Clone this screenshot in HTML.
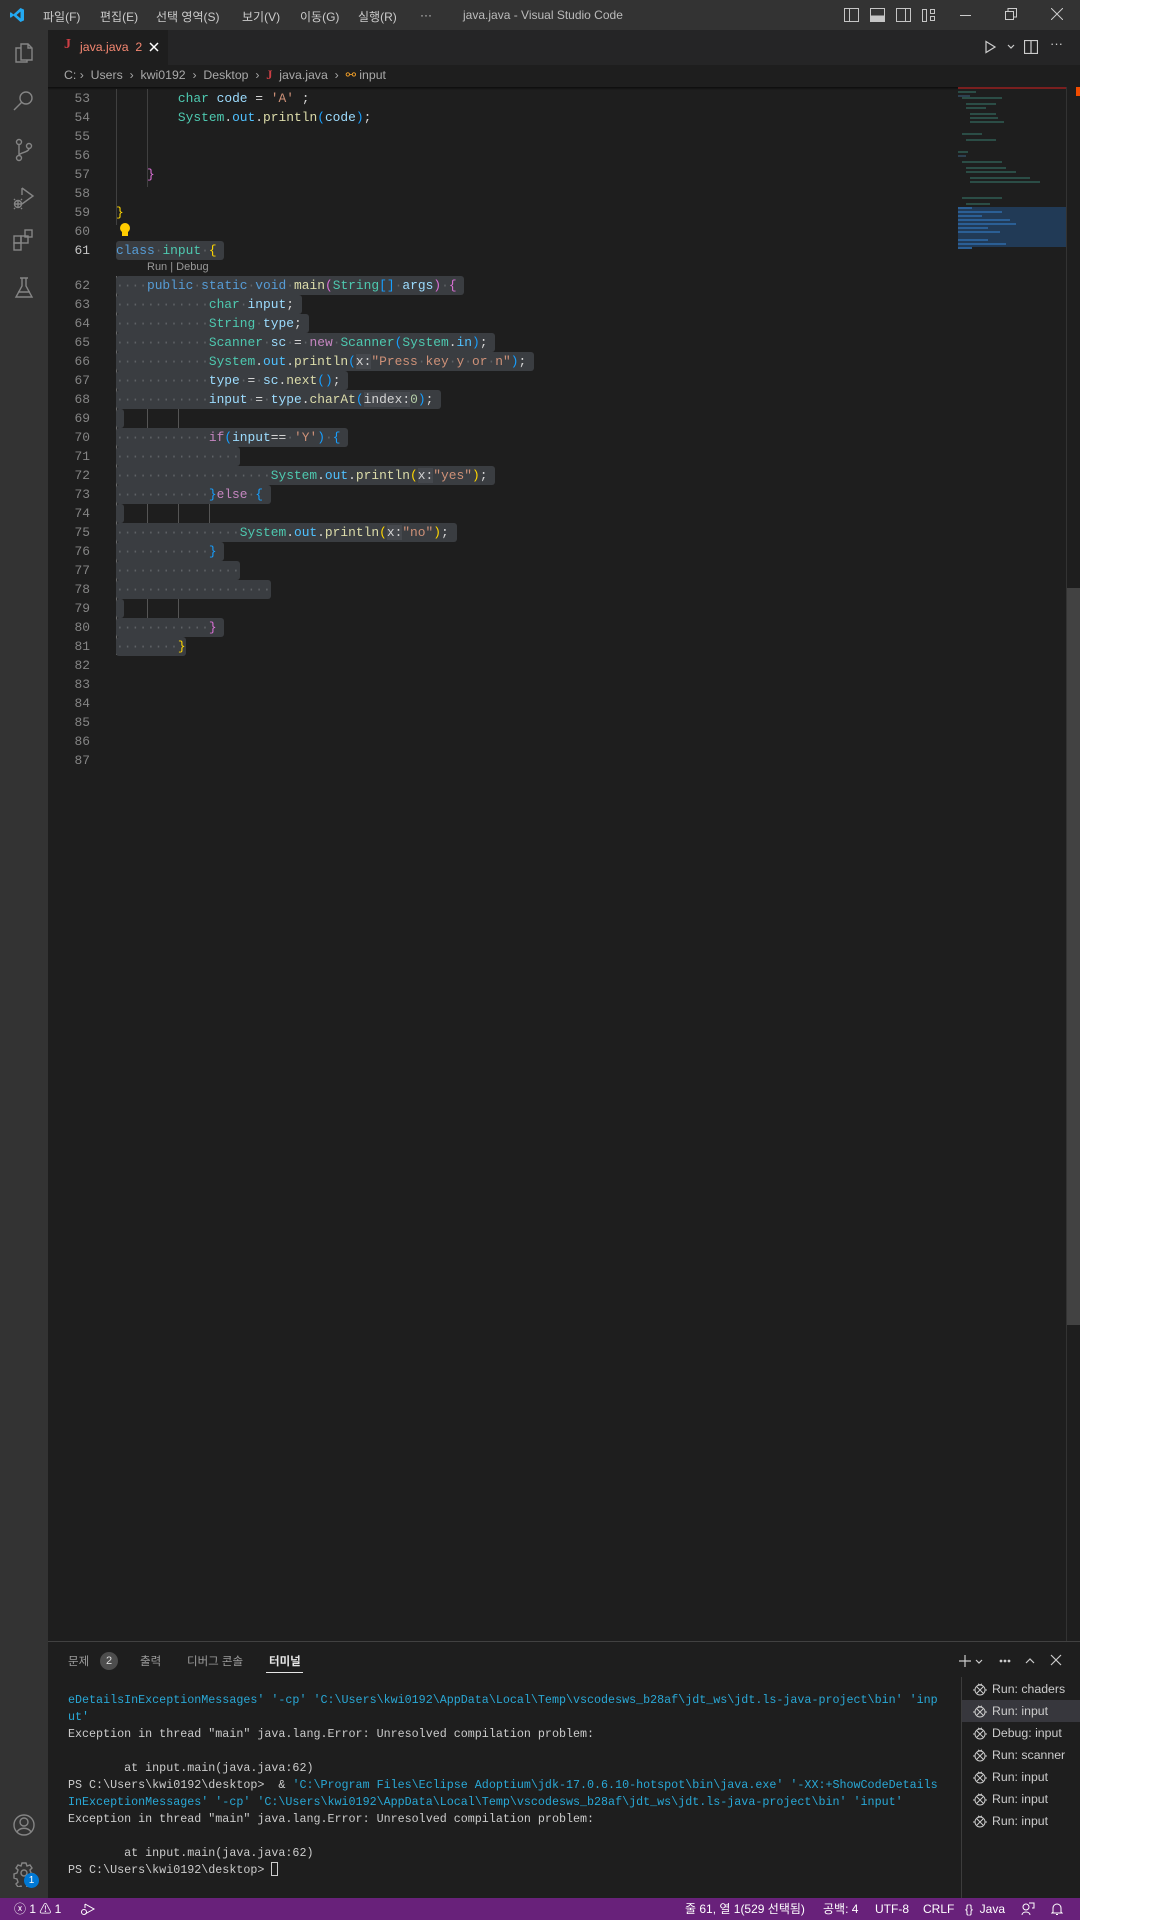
<!DOCTYPE html>
<html><head><meta charset="utf-8">
<style>
*{margin:0;padding:0;box-sizing:border-box}
body{width:1152px;height:1920px;background:#fff;position:relative;overflow:hidden;font-family:"Liberation Sans","Noto Sans CJK KR",sans-serif}
.a{position:absolute}
#win{position:absolute;left:0;top:0;width:1080px;height:1920px;background:#1e1e1e;overflow:hidden}
.mono{font-family:"Liberation Mono","DejaVu Sans Mono",monospace}
.ln{position:absolute;left:48px;width:42px;text-align:right;color:#858585;font-size:12.9px;line-height:19px;height:19px}
.cl{position:absolute;left:116px;font-size:12.9px;line-height:19px;height:19px;white-space:pre;color:#d4d4d4}
.s{display:inline-block;height:19px;background:#3a3d41;border-radius:3px;vertical-align:top}
.d{color:#5f6266}
.k{color:#569cd6}.t{color:#4ec9b0}.v{color:#9cdcfe}.f{color:#dcdcaa}.p{color:#c586c0}.st{color:#ce9178}.c{color:#4fc1ff}.n{color:#b5cea8}
.y{color:#ffd700}.m{color:#da70d6}.b{color:#179fff}
.h{color:#d4d4d4;background:#45484d}
.g{position:absolute;width:1px;background:#404040}
.menu{position:absolute;top:8px;font-size:12px;color:#cccccc}
.tl{position:absolute;left:68px;font-size:11.7px;line-height:17px;white-space:pre;color:#cccccc}
.cy{color:#29a8d6}
.ti{position:absolute;left:962px;width:118px;height:22px;font-size:12.3px;color:#cccccc;line-height:22px;padding-left:30px}
.ti svg{position:absolute;left:10px;top:3px}
.sb{position:absolute;top:1898px;font-size:12px;color:#fff;line-height:22px}
</style></head><body>
<div id="win">
<div class="a" style="left:0;top:0;width:1080px;height:30px;background:#333333"></div>
<svg class="a" style="left:9px;top:7px" width="16" height="16" viewBox="0 0 16 16"><path d="M11.5 1 L15 2.6 V13.4 L11.5 15 L4.5 8.6 L1.8 10.7 L1 10.2 V5.8 L1.8 5.3 L4.5 7.4 Z M11.5 4.6 L7.5 8 L11.5 11.4 Z" fill="#23a9f2"/></svg>
<div class="menu" style="left:43px">파일(F)</div>
<div class="menu" style="left:100px">편집(E)</div>
<div class="menu" style="left:156px">선택 영역(S)</div>
<div class="menu" style="left:242px">보기(V)</div>
<div class="menu" style="left:300px">이동(G)</div>
<div class="menu" style="left:358px">실행(R)</div>
<div class="menu" style="left:420px">···</div>
<div class="menu" style="left:463px;color:#bbbbbb">java.java - Visual Studio Code</div>
<svg class="a" style="left:844px;top:8px" width="110" height="15" viewBox="0 0 110 15" fill="none" stroke="#c5c5c5" stroke-width="1"><rect x="0.5" y="0.5" width="14" height="13"/><line x1="5.5" y1="1" x2="5.5" y2="14"/><rect x="26.5" y="0.5" width="14" height="13"/><rect x="27" y="8" width="13" height="5" fill="#c5c5c5"/><rect x="52.5" y="0.5" width="14" height="13"/><line x1="61.5" y1="1" x2="61.5" y2="14"/><rect x="78.5" y="1.5" width="4" height="12"/><rect x="86.5" y="1.5" width="4" height="4"/><rect x="86.5" y="8.5" width="4" height="4"/></svg>
<div class="a" style="left:960px;top:15px;width:11px;height:1px;background:#ccc"></div>
<svg class="a" style="left:1005px;top:8px" width="12" height="12" fill="none" stroke="#ccc"><rect x="0.5" y="3.5" width="8" height="8"/><path d="M3 3.5V0.5h8.5V9H8.5"/></svg>
<svg class="a" style="left:1051px;top:8px" width="12" height="12" stroke="#ccc"><path d="M0 0L12 12M12 0L0 12"/></svg>

<div class="a" style="left:0;top:30px;width:48px;height:1868px;background:#333333"></div>
<svg class="a" style="left:12px;top:41px" width="24" height="260" viewBox="0 0 24 260" fill="none" stroke="#858585" stroke-width="1.4">
<path d="M9 3h7l4 4v12h-11zM16 3v4h4M9 7H4v14h11v-2"/>
<circle cx="14" cy="57" r="6"/><path d="M9.5 61.5L2 69"/>
<circle cx="7" cy="101" r="2.5"/><circle cx="7" cy="117" r="2.5"/><circle cx="17" cy="105" r="2.5"/><path d="M7 103.5v11M17 107.5c0 4-10 4-10 7"/>
<path d="M10 147l11 8-11 8M10 147v7"/><circle cx="6" cy="163" r="3.5"/><path d="M2 163h8M6 159v8M3 159l-1-1M9 159l1-1M3 167l-1 1M9 167l1 1"/>
<rect x="2" y="195" width="7" height="7"/><rect x="9" y="195" width="7" height="7"/><rect x="2" y="202" width="7" height="7"/><rect x="13" y="189" width="7" height="7"/>
<path d="M8 237h8M10 237v8l-6 11h16l-6-11v-8M6 251h12"/>
</svg>
<svg class="a" style="left:12px;top:1813px" width="24" height="74" viewBox="0 0 24 74" fill="none" stroke="#858585" stroke-width="1.4">
<circle cx="12" cy="12" r="10"/><circle cx="12" cy="9" r="4"/><path d="M5 19c3-5 11-5 14 0"/>
<circle cx="12" cy="60" r="3"/><path d="M10 50h4l1 3 3-1 2 3-2 2 1 3 3 1v4l-3 1-1 3 2 2-2 3-3-1-1 3h-4l-1-3-3 1-2-3 2-2-1-3-3-1v-4l3-1 1-3-2-2 2-3 3 1z"/>
</svg>
<div class="a" style="left:24px;top:1873px;width:15px;height:15px;border-radius:50%;background:#0078d4;color:#fff;font-size:10px;text-align:center;line-height:15px">1</div>

<div class="a" style="left:48px;top:30px;width:1032px;height:35px;background:#252526"></div>
<div class="a" style="left:48px;top:30px;width:120px;height:35px;background:#1e1e1e"></div>
<div class="a" style="left:64px;top:37px;color:#cc3e44;font-size:14px;font-weight:bold;font-family:'Liberation Serif',serif">J</div>
<div class="a" style="left:80px;top:40px;color:#f48771;font-size:12.3px">java.java&nbsp; 2</div>
<svg class="a" style="left:149px;top:42px" width="10" height="10" stroke="#fff" stroke-width="1.5"><path d="M1 1L9 9M9 1L1 9"/></svg>
<svg class="a" style="left:984px;top:40px" width="40" height="14" fill="none" stroke="#ccc" stroke-width="1.2"><path d="M2 1.5L11 7 2 12.5z"/><path d="M24 5l3 3 3-3"/></svg>
<svg class="a" style="left:1024px;top:40px" width="14" height="14" fill="none" stroke="#ccc" stroke-width="1.2"><rect x="0.5" y="0.5" width="13" height="13"/><line x1="7" y1="0" x2="7" y2="14"/></svg>
<div class="a" style="left:1050px;top:36px;color:#ccc;font-size:13px">···</div>

<div class="a" style="left:64px;top:68px;font-size:12.3px;color:#a9a9a9;white-space:pre">C: ›  Users  ›  kwi0192  ›  Desktop  ›  <span style="color:#cc3e44;font-weight:bold;font-family:'Liberation Serif',serif">J</span>  java.java  ›  <span style="color:#ee9d28">⚯</span> input</div>
<div class="a" style="left:48px;top:87px;width:910px;height:3px;background:linear-gradient(#0c0c0c,#1e1e1e)"></div>

<div class="g" style="left:116px;top:89px;height:136px"></div>
<div class="g" style="left:147px;top:89px;height:98px"></div>
<div class="g" style="left:116px;top:276px;height:379px;background:#6a6a6a"></div>
<div class="g" style="left:147px;top:295px;height:360px;background:#555"></div>
<div class="g" style="left:178px;top:295px;height:360px;background:#555"></div>
<div class="g" style="left:209px;top:466px;height:114px;background:#555"></div>

<div class="mono">
<div class="ln" style="top:89px">53</div><div class="ln" style="top:108px">54</div><div class="ln" style="top:127px">55</div><div class="ln" style="top:146px">56</div><div class="ln" style="top:165px">57</div><div class="ln" style="top:184px">58</div><div class="ln" style="top:203px">59</div><div class="ln" style="top:222px">60</div><div class="ln" style="top:241px;color:#c6c6c6">61</div>
<div class="ln" style="top:276px">62</div><div class="ln" style="top:295px">63</div><div class="ln" style="top:314px">64</div><div class="ln" style="top:333px">65</div><div class="ln" style="top:352px">66</div><div class="ln" style="top:371px">67</div><div class="ln" style="top:390px">68</div><div class="ln" style="top:409px">69</div><div class="ln" style="top:428px">70</div><div class="ln" style="top:447px">71</div><div class="ln" style="top:466px">72</div><div class="ln" style="top:485px">73</div><div class="ln" style="top:504px">74</div><div class="ln" style="top:523px">75</div><div class="ln" style="top:542px">76</div><div class="ln" style="top:561px">77</div><div class="ln" style="top:580px">78</div><div class="ln" style="top:599px">79</div><div class="ln" style="top:618px">80</div><div class="ln" style="top:637px">81</div><div class="ln" style="top:656px">82</div><div class="ln" style="top:675px">83</div><div class="ln" style="top:694px">84</div><div class="ln" style="top:713px">85</div><div class="ln" style="top:732px">86</div><div class="ln" style="top:751px">87</div>

<div class="cl" style="top:89px">        <span class="t">char</span> <span class="v">code</span> = <span class="st">'A'</span> ;</div>
<div class="cl" style="top:108px">        <span class="t">System</span>.<span class="c">out</span>.<span class="f">println</span><span class="b">(</span><span class="v">code</span><span class="b">)</span>;</div>
<div class="cl" style="top:165px">    <span class="m">}</span></div>
<div class="cl" style="top:203px"><span class="y">}</span></div>
<div class="cl" style="top:241px"><span class="s"><span class="k">class</span><span class="d">·</span><span class="t">input</span><span class="d">·</span><span class="y">{</span> </span></div>
<div class="cl" style="top:276px"><span class="s"><span class="d">····</span><span class="k">public</span><span class="d">·</span><span class="k">static</span><span class="d">·</span><span class="k">void</span><span class="d">·</span><span class="f">main</span><span class="m">(</span><span class="t">String</span><span class="b">[]</span><span class="d">·</span><span class="v">args</span><span class="m">)</span><span class="d">·</span><span class="m">{</span> </span></div>
<div class="cl" style="top:295px"><span class="s"><span class="d">············</span><span class="t">char</span><span class="d">·</span><span class="v">input</span>; </span></div>
<div class="cl" style="top:314px"><span class="s"><span class="d">············</span><span class="t">String</span><span class="d">·</span><span class="v">type</span>; </span></div>
<div class="cl" style="top:333px"><span class="s"><span class="d">············</span><span class="t">Scanner</span><span class="d">·</span><span class="v">sc</span><span class="d">·</span>=<span class="d">·</span><span class="p">new</span><span class="d">·</span><span class="t">Scanner</span><span class="b">(</span><span class="t">System</span>.<span class="c">in</span><span class="b">)</span>; </span></div>
<div class="cl" style="top:352px"><span class="s"><span class="d">············</span><span class="t">System</span>.<span class="c">out</span>.<span class="f">println</span><span class="b">(</span><span class="h">x:</span><span class="st">"Press<span class="d">·</span>key<span class="d">·</span>y<span class="d">·</span>or<span class="d">·</span>n"</span><span class="b">)</span>; </span></div>
<div class="cl" style="top:371px"><span class="s"><span class="d">············</span><span class="v">type</span><span class="d">·</span>=<span class="d">·</span><span class="v">sc</span>.<span class="f">next</span><span class="b">()</span>; </span></div>
<div class="cl" style="top:390px"><span class="s"><span class="d">············</span><span class="v">input</span><span class="d">·</span>=<span class="d">·</span><span class="v">type</span>.<span class="f">charAt</span><span class="b">(</span><span class="h">index:</span><span class="n">0</span><span class="b">)</span>; </span></div>
<div class="cl" style="top:409px"><span class="s"> </span></div>
<div class="cl" style="top:428px"><span class="s"><span class="d">············</span><span class="p">if</span><span class="b">(</span><span class="v">input</span>==<span class="d">·</span><span class="st">'Y'</span><span class="b">)</span><span class="d">·</span><span class="b">{</span> </span></div>
<div class="cl" style="top:447px"><span class="s"><span class="d">················</span></span></div>
<div class="cl" style="top:466px"><span class="s"><span class="d">····················</span><span class="t">System</span>.<span class="c">out</span>.<span class="f">println</span><span class="y">(</span><span class="h">x:</span><span class="st">"yes"</span><span class="y">)</span>; </span></div>
<div class="cl" style="top:485px"><span class="s"><span class="d">············</span><span class="b">}</span><span class="p">else</span><span class="d">·</span><span class="b">{</span> </span></div>
<div class="cl" style="top:504px"><span class="s"> </span></div>
<div class="cl" style="top:523px"><span class="s"><span class="d">················</span><span class="t">System</span>.<span class="c">out</span>.<span class="f">println</span><span class="y">(</span><span class="h">x:</span><span class="st">"no"</span><span class="y">)</span>; </span></div>
<div class="cl" style="top:542px"><span class="s"><span class="d">············</span><span class="b">}</span> </span></div>
<div class="cl" style="top:561px"><span class="s"><span class="d">················</span></span></div>
<div class="cl" style="top:580px"><span class="s"><span class="d">····················</span></span></div>
<div class="cl" style="top:599px"><span class="s"> </span></div>
<div class="cl" style="top:618px"><span class="s"><span class="d">············</span><span class="m">}</span> </span></div>
<div class="cl" style="top:637px"><span class="s"><span class="d">········</span><span class="y">}</span></span></div>
</div>
<div class="a" style="left:147px;top:261px;font-size:11px;color:#999">Run | Debug</div>
<div class="a" style="left:120px;top:223px;width:10px;height:10px;border-radius:50%;background:#ffcc00"></div>
<div class="a" style="left:122px;top:232px;width:6px;height:4px;background:#ffcc00"></div>

<div class="a" style="left:958px;top:87px;width:108px;height:2px;background:#7a1f1f"></div>
<div class="a" style="left:1066px;top:87px;width:1px;height:1554px;background:#333"></div>
<div class="a" style="left:1076px;top:87px;width:4px;height:9px;background:#f14c00"></div>
<div class="a" style="left:958px;top:207px;width:108px;height:40px;background:#213a56"></div>
<svg class="a" style="left:958px;top:90px" width="108" height="160" viewBox="0 0 108 160" stroke-width="1" opacity="0.55">
<g stroke="#4ec9b0"><path d="M0 2h18M4 8h40M8 14h30M8 18h20M12 24h26M12 28h28M12 32h34M4 44h20M8 50h30M0 62h10M4 72h40M8 78h40M8 82h50M12 88h60M12 92h70M4 108h40M8 114h24"/></g>
<g stroke="#569cd6"><path d="M0 6h12M0 66h8"/></g>
</svg>
<svg class="a" style="left:958px;top:207px" width="108" height="44"><g stroke="#2b5f95" stroke-width="2"><path d="M0 1h14M0 5h44M0 9h24M0 13h52M0 17h58M0 21h30M0 25h42M0 33h30M0 37h48M0 41h14"/></g></svg>
<div class="a" style="left:1067px;top:588px;width:13px;height:737px;background:#424242"></div>

<div class="a" style="left:48px;top:1641px;width:1032px;height:257px;background:#1e1e1e;border-top:1px solid #414141"></div>
<div class="a" style="left:68px;top:1653px;font-size:11.5px;color:#9d9d9d">문제</div>
<div class="a" style="left:100px;top:1652px;width:18px;height:18px;border-radius:50%;background:#4d4d4d;color:#ddd;font-size:11px;text-align:center;line-height:18px">2</div>
<div class="a" style="left:140px;top:1653px;font-size:11.5px;color:#9d9d9d">출력</div>
<div class="a" style="left:187px;top:1653px;font-size:11.5px;color:#9d9d9d">디버그 콘솔</div>
<div class="a" style="left:269px;top:1653px;font-size:11.5px;color:#e7e7e7;font-weight:bold">터미널</div>
<div class="a" style="left:266px;top:1672px;width:37px;height:1px;background:#e7e7e7"></div>
<svg class="a" style="left:958px;top:1654px" width="112" height="14" fill="none" stroke="#ccc" stroke-width="1.2"><path d="M7 1v12M1 7h12M18 6l3 3 3-3M93 1l10 10M103 1L93 11M68 9l4-4 4 4"/><circle cx="43" cy="7" r="0.8" fill="#ccc"/><circle cx="47" cy="7" r="0.8" fill="#ccc"/><circle cx="51" cy="7" r="0.8" fill="#ccc"/></svg>

<div class="mono">
<div class="tl cy" style="top:1692px">eDetailsInExceptionMessages' '-cp' 'C:\Users\kwi0192\AppData\Local\Temp\vscodesws_b28af\jdt_ws\jdt.ls-java-project\bin' 'inp</div>
<div class="tl cy" style="top:1709px">ut'</div>
<div class="tl" style="top:1726px">Exception in thread "main" java.lang.Error: Unresolved compilation problem:</div>
<div class="tl" style="top:1760px">        at input.main(java.java:62)</div>
<div class="tl" style="top:1777px">PS C:\Users\kwi0192\desktop>  &amp; <span class="cy">'C:\Program Files\Eclipse Adoptium\jdk-17.0.6.10-hotspot\bin\java.exe' '-XX:+ShowCodeDetails</span></div>
<div class="tl cy" style="top:1794px">InExceptionMessages' '-cp' 'C:\Users\kwi0192\AppData\Local\Temp\vscodesws_b28af\jdt_ws\jdt.ls-java-project\bin' 'input'</div>
<div class="tl" style="top:1811px">Exception in thread "main" java.lang.Error: Unresolved compilation problem:</div>
<div class="tl" style="top:1845px">        at input.main(java.java:62)</div>
<div class="tl" style="top:1862px">PS C:\Users\kwi0192\desktop> <span style="display:inline-block;width:7px;height:14px;border:1px solid #ccc;vertical-align:-3px"></span></div>
</div>
<div class="a" style="left:961px;top:1677px;width:1px;height:221px;background:#3c3c3c"></div>
<div class="a" style="left:962px;top:1700px;width:118px;height:22px;background:#37373d"></div>
<div class="ti" style="top:1678px"><svg width="16" height="16" fill="none" stroke="#ccc"><circle cx="8" cy="9" r="5"/><path d="M5 6l6 6M11 6l-6 6M6 3l2 1 2-1M1 9h2M13 9h2"/></svg>Run: chaders</div>
<div class="ti" style="top:1700px"><svg width="16" height="16" fill="none" stroke="#ccc"><circle cx="8" cy="9" r="5"/><path d="M5 6l6 6M11 6l-6 6M6 3l2 1 2-1M1 9h2M13 9h2"/></svg>Run: input</div>
<div class="ti" style="top:1722px"><svg width="16" height="16" fill="none" stroke="#ccc"><circle cx="8" cy="9" r="5"/><path d="M5 6l6 6M11 6l-6 6M6 3l2 1 2-1M1 9h2M13 9h2"/></svg>Debug: input</div>
<div class="ti" style="top:1744px"><svg width="16" height="16" fill="none" stroke="#ccc"><circle cx="8" cy="9" r="5"/><path d="M5 6l6 6M11 6l-6 6M6 3l2 1 2-1M1 9h2M13 9h2"/></svg>Run: scanner</div>
<div class="ti" style="top:1766px"><svg width="16" height="16" fill="none" stroke="#ccc"><circle cx="8" cy="9" r="5"/><path d="M5 6l6 6M11 6l-6 6M6 3l2 1 2-1M1 9h2M13 9h2"/></svg>Run: input</div>
<div class="ti" style="top:1788px"><svg width="16" height="16" fill="none" stroke="#ccc"><circle cx="8" cy="9" r="5"/><path d="M5 6l6 6M11 6l-6 6M6 3l2 1 2-1M1 9h2M13 9h2"/></svg>Run: input</div>
<div class="ti" style="top:1810px"><svg width="16" height="16" fill="none" stroke="#ccc"><circle cx="8" cy="9" r="5"/><path d="M5 6l6 6M11 6l-6 6M6 3l2 1 2-1M1 9h2M13 9h2"/></svg>Run: input</div>

<div class="a" style="left:0;top:1898px;width:1080px;height:22px;background:#68217a"></div>
<div class="sb" style="left:14px">ⓧ 1 ⚠ 1</div>
<svg class="a" style="left:80px;top:1902px" width="16" height="14" fill="none" stroke="#fff"><path d="M5 2l9 5-9 5M5 2v4"/><circle cx="4" cy="10" r="2.5"/></svg>
<div class="sb" style="left:685px">줄 61, 열 1(529 선택됨)</div>
<div class="sb" style="left:823px">공백: 4</div>
<div class="sb" style="left:875px">UTF-8</div>
<div class="sb" style="left:923px">CRLF</div>
<div class="sb" style="left:965px">{} &nbsp;Java</div>
<svg class="a" style="left:1021px;top:1902px" width="14" height="14" fill="none" stroke="#fff"><circle cx="5" cy="5" r="3"/><path d="M1 13c0-4 8-4 8 0M8 1h5v5h-2"/></svg>
<svg class="a" style="left:1051px;top:1902px" width="12" height="14" fill="none" stroke="#fff"><path d="M2 10V6a4 4 0 0 1 8 0v4l1 1H1zM5 12.5h2"/></svg>
</div>
</body></html>
